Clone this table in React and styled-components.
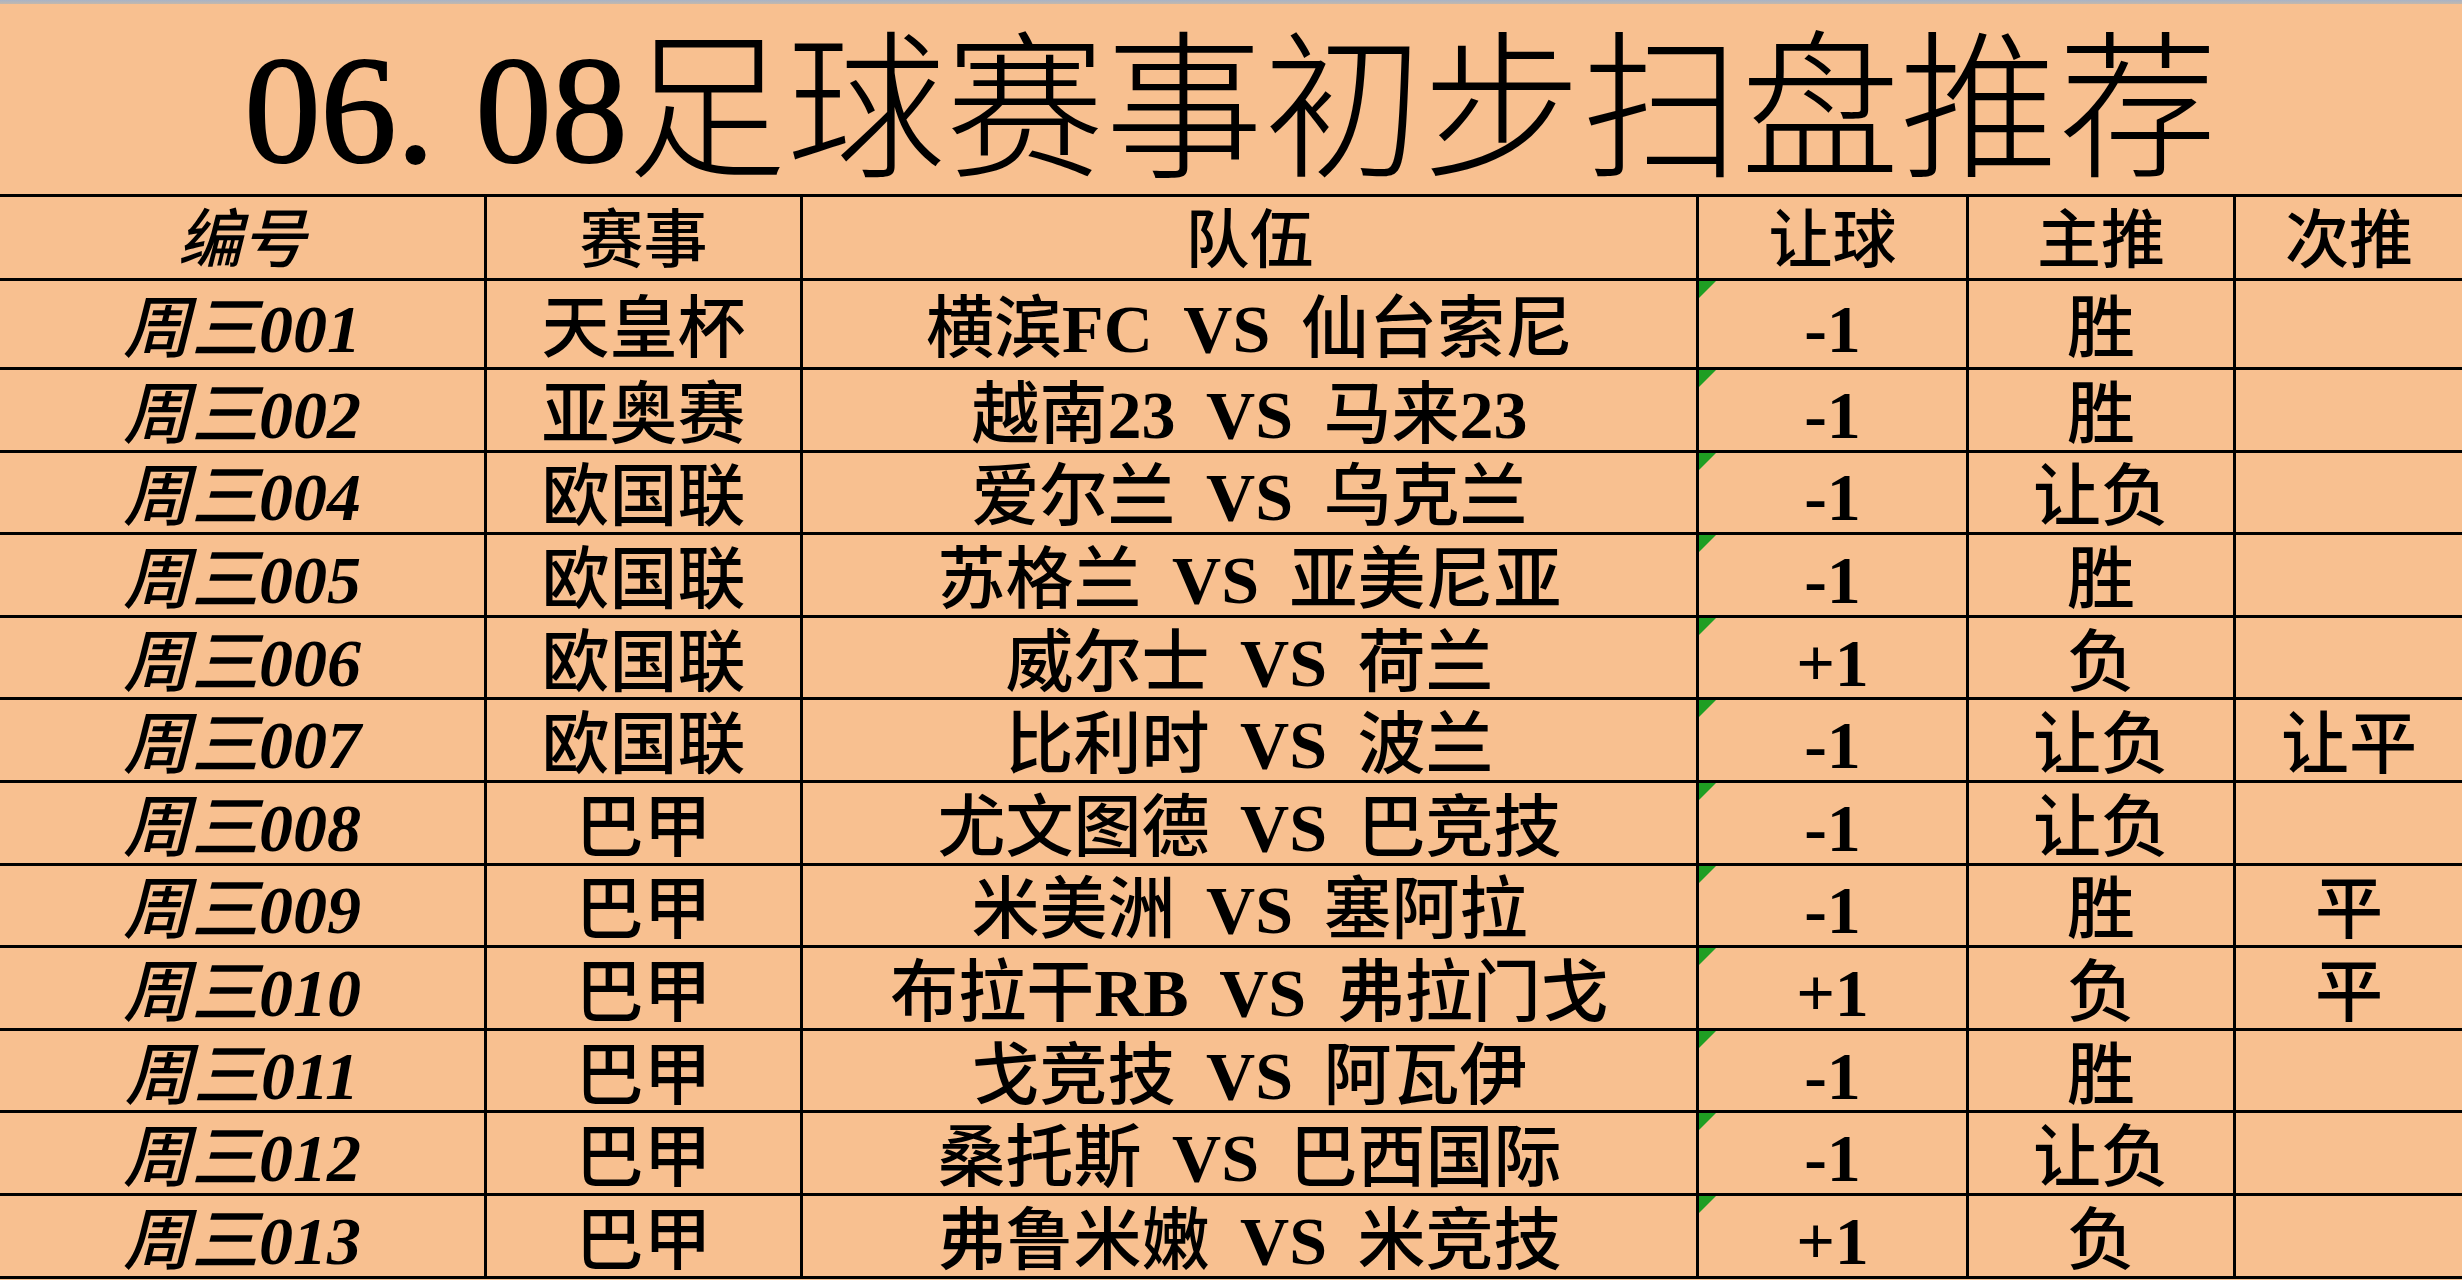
import React from 'react';
import styled, { createGlobalStyle } from 'styled-components';

const PEACH = '#F8C090';

const GlobalStyle = createGlobalStyle`
  html, body {
    margin: 0;
    padding: 0;
    background: ${PEACH};
  }
  body {
    font-family: "Liberation Serif", "Noto Sans CJK SC", serif;
    color: #000;
  }
`;

const rows = [
  { no: '周三001', league: '天皇杯', match: '横滨FC VS 仙台索尼', hcp: '-1', main: '胜', sub: '' },
  { no: '周三002', league: '亚奥赛', match: '越南23 VS 马来23', hcp: '-1', main: '胜', sub: '' },
  { no: '周三004', league: '欧国联', match: '爱尔兰 VS 乌克兰', hcp: '-1', main: '让负', sub: '' },
  { no: '周三005', league: '欧国联', match: '苏格兰 VS 亚美尼亚', hcp: '-1', main: '胜', sub: '' },
  { no: '周三006', league: '欧国联', match: '威尔士 VS 荷兰', hcp: '+1', main: '负', sub: '' },
  { no: '周三007', league: '欧国联', match: '比利时 VS 波兰', hcp: '-1', main: '让负', sub: '让平' },
  { no: '周三008', league: '巴甲', match: '尤文图德 VS 巴竞技', hcp: '-1', main: '让负', sub: '' },
  { no: '周三009', league: '巴甲', match: '米美洲 VS 塞阿拉', hcp: '-1', main: '胜', sub: '平' },
  { no: '周三010', league: '巴甲', match: '布拉干RB VS 弗拉门戈', hcp: '+1', main: '负', sub: '平' },
  { no: '周三011', league: '巴甲', match: '戈竞技 VS 阿瓦伊', hcp: '-1', main: '胜', sub: '' },
  { no: '周三012', league: '巴甲', match: '桑托斯 VS 巴西国际', hcp: '-1', main: '让负', sub: '' },
  { no: '周三013', league: '巴甲', match: '弗鲁米嫩 VS 米竞技', hcp: '+1', main: '负', sub: '' },
];

// latin letters / digits are drawn a bit heavier, like the sheet's half-width glyphs
const withLatin = (text) =>
  text.split(/([A-Za-z0-9+\-]+)/).map((part, i) =>
    /[A-Za-z0-9+\-]/.test(part) ? <Latin key={i}>{part}</Latin> : part
  );

function Cell({ head, italic, mark, children }) {
  return (
    <CellBox $head={head} $italic={italic}>
      {mark && <Mark />}
      <CellText>{children}</CellText>
    </CellBox>
  );
}

function App() {
  return (
    <Page>
      <GlobalStyle />
      <TopStrip />
      <TitleBar>
        <TitleNum>06<Dot>.</Dot>08</TitleNum>足球赛事初步扫盘推荐
      </TitleBar>
      <Sheet>
        <Cell head italic>编号</Cell>
        <Cell head>赛事</Cell>
        <Cell head>队伍</Cell>
        <Cell head>让球</Cell>
        <Cell head>主推</Cell>
        <Cell head>次推</Cell>
        {rows.map((r) => (
          <React.Fragment key={r.no}>
            <Cell italic>{withLatin(r.no)}</Cell>
            <Cell>{r.league}</Cell>
            <Cell>{withLatin(r.match)}</Cell>
            <Cell mark>{withLatin(r.hcp)}</Cell>
            <Cell>{r.main}</Cell>
            <Cell>{r.sub}</Cell>
          </React.Fragment>
        ))}
      </Sheet>
    </Page>
  );
}

export default App;

const Page = styled.div`
  width: 2462px;
  height: 1280px;
  overflow: hidden;
  display: flex;
  flex-direction: column;
  background: ${PEACH};
`;

const TopStrip = styled.div`
  height: 4px;
  flex-shrink: 0;
  background: linear-gradient(#a8b3c6, #c4b8ac);
`;

const TitleBar = styled.h1`
  margin: 0;
  height: 190px;
  flex-shrink: 0;
  box-sizing: border-box;
  padding-top: 24px;
  display: flex;
  align-items: center;
  justify-content: center;
  font-size: 159px;
  font-weight: 300;
  line-height: 1;
  white-space: nowrap;
`;

const TitleNum = styled.span`
  font-size: 152px;
  -webkit-text-stroke: 2px #000;
`;

const Dot = styled.span`
  margin-right: 0.27em;
`;

const Sheet = styled.div`
  display: grid;
  grid-template-columns: 484px 313px 893px 267px 264px 226px;
  grid-template-rows: 81px 86px repeat(11, 79.6px);
  gap: 3px;
  background: #000;
  border-top: 3px solid #000;
  border-bottom: 3px solid #000;
  flex-shrink: 0;
`;

const CellBox = styled.div`
  position: relative;
  box-sizing: border-box;
  padding-top: ${(p) => (p.$head ? 6 : 10)}px;
  background: ${PEACH};
  display: flex;
  align-items: center;
  justify-content: center;
  font-size: ${(p) => (p.$head ? 64 : 68)}px;
  font-style: ${(p) => (p.$italic ? 'italic' : 'normal')};
  font-weight: 500;
  line-height: 1;
`;

const CellText = styled.span`
  white-space: pre;
  word-spacing: 0.2em;
`;

const Latin = styled.span`
  font-weight: 700;
`;

const Mark = styled.span`
  position: absolute;
  top: 0;
  left: 0;
  width: 0;
  height: 0;
  border-top: 17px solid #1f9e23;
  border-right: 17px solid transparent;
`;
